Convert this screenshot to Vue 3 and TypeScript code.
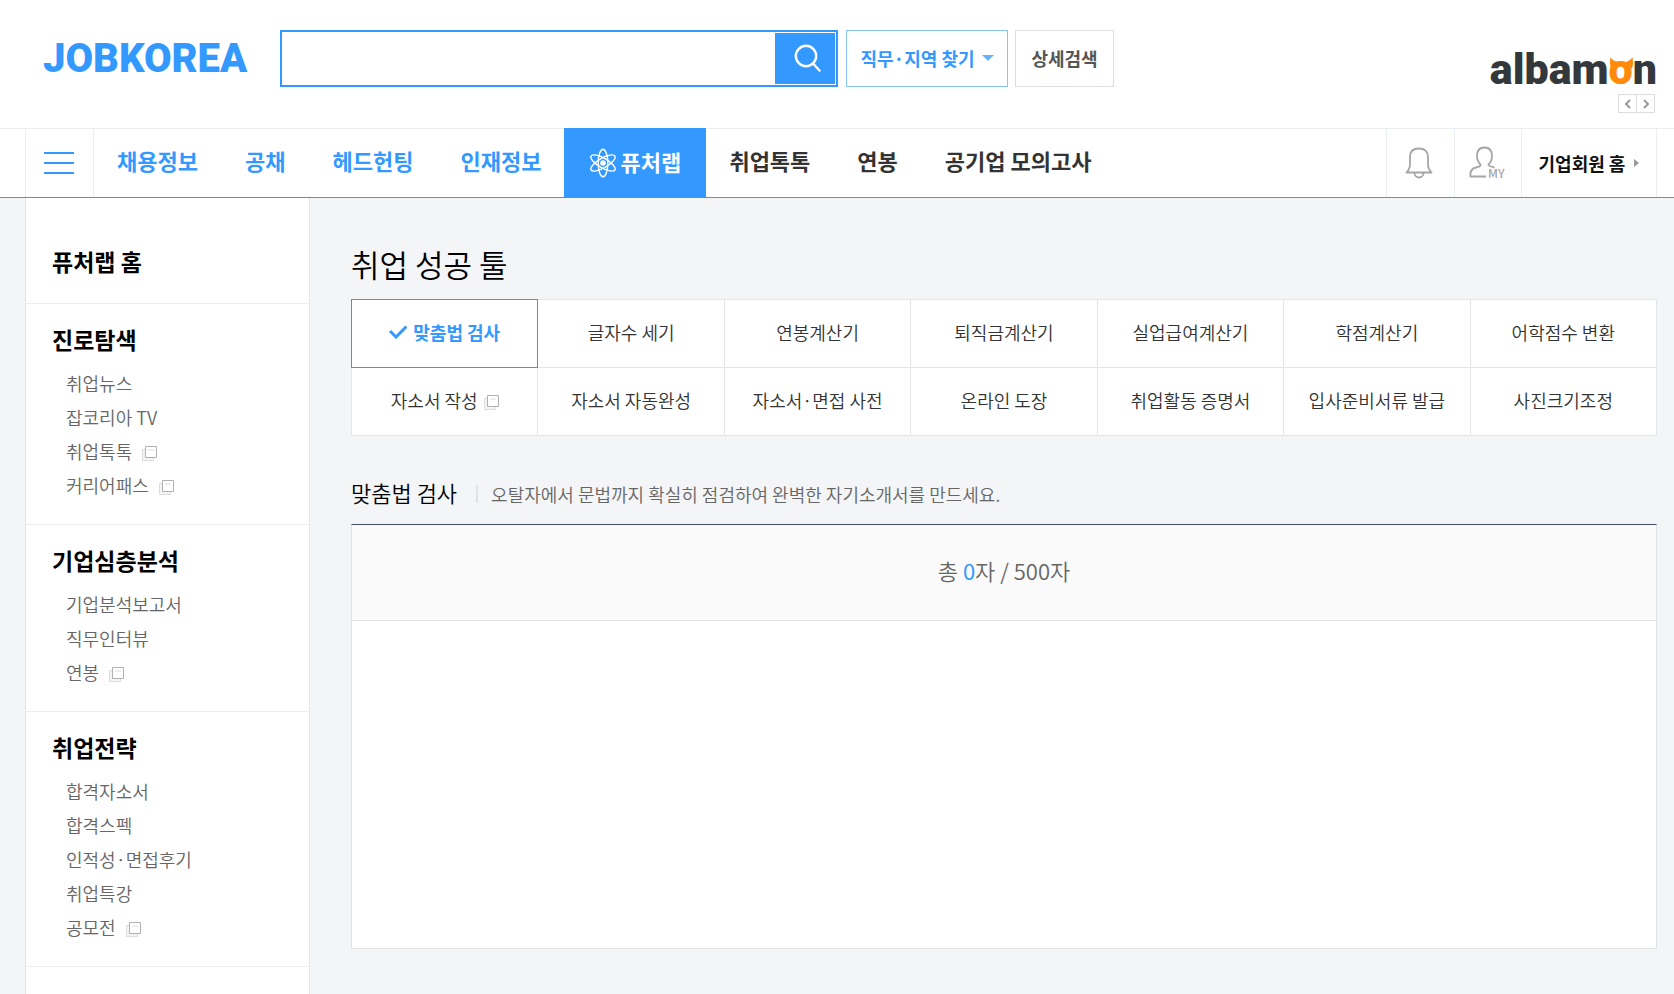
<script setup lang="ts">
import { ref, computed } from 'vue'

interface LinkItem { label: string; popup?: boolean }
interface Section { title: string; items: LinkItem[] }

const keyword = ref('')
const draft = ref('')
const limit = 500
const count = computed(() => draft.value.length)

const primaryNav = ['채용정보', '공채', '헤드헌팅', '인재정보']
const secondaryNav = ['취업톡톡', '연봉', '공기업 모의고사']

const sections: Section[] = [
  { title: '진로탐색', items: [{ label: '취업뉴스' }, { label: '잡코리아 TV' }, { label: '취업톡톡', popup: true }, { label: '커리어패스', popup: true }] },
  { title: '기업심층분석', items: [{ label: '기업분석보고서' }, { label: '직무인터뷰' }, { label: '연봉', popup: true }] },
  { title: '취업전략', items: [{ label: '합격자소서' }, { label: '합격스펙' }, { label: '인적성·면접후기' }, { label: '취업특강' }, { label: '공모전', popup: true }] },
]

const tools: LinkItem[] = [
  { label: '맞춤법 검사' }, { label: '글자수 세기' }, { label: '연봉계산기' }, { label: '퇴직금계산기' },
  { label: '실업급여계산기' }, { label: '학점계산기' }, { label: '어학점수 변환' },
  { label: '자소서 작성', popup: true }, { label: '자소서 자동완성' }, { label: '자소서·면접 사전' }, { label: '온라인 도장' },
  { label: '취업활동 증명서' }, { label: '입사준비서류 발급' }, { label: '사진크기조정' },
]
const activeTool = '맞춤법 검사'
</script>

<template>
  <div class="page">
    <header class="top">
      <a href="#" class="logo">JOBKOREA</a>
      <form class="search" @submit.prevent>
        <input v-model="keyword" type="text" aria-label="검색어" />
        <button type="submit" aria-label="검색">
          <svg width="28" height="30" viewBox="0 0 28 30" fill="none" stroke="#fff" stroke-width="2.4" stroke-linecap="round">
            <circle cx="13" cy="12" r="10.2" /><path d="M20.500 20l6 6.500" />
          </svg>
        </button>
      </form>
      <button type="button" class="box find">직무·지역 찾기
        <svg width="12" height="6" viewBox="0 0 12 6"><path d="M0 0h12L6 6z" fill="#66b2ff" /></svg>
      </button>
      <button type="button" class="box detail">상세검색</button>
      <div class="partner">
        <a href="#" class="albamon">albam<span class="mon">o<svg class="horns" width="26" height="12" viewBox="0 0 26 12"><path d="M1.500 0Q3 3 9 5.500L2 12Q0 6 1.500 0zM23.500 0Q22 3 16 5.500L23 12Q25 6 23.500 0z" fill="#ff8a0a" /></svg></span>n</a>
        <div class="pager">
          <button type="button" aria-label="이전"><svg width="8" height="10" viewBox="0 0 8 10"><path d="M6 1L2 5l4 4" /></svg></button>
          <button type="button" aria-label="다음"><svg width="8" height="10" viewBox="0 0 8 10"><path d="M2 1l4 4-4 4" /></svg></button>
        </div>
      </div>
    </header>

    <nav class="gnb">
      <button type="button" class="menu" aria-label="전체메뉴">
        <svg width="30" height="22" viewBox="0 0 30 22" stroke="#39f" stroke-width="2"><path d="M0 1h30M0 11h30M0 21h30" /></svg>
      </button>
      <div class="links primary"><a v-for="n in primaryNav" :key="n" href="#">{{ n }}</a></div>
      <a href="#" class="lab">
        <svg width="26" height="30" viewBox="0 0 26 30" fill="none" stroke="#fff" stroke-width="1.400">
          <ellipse cx="13" cy="15" rx="4.800" ry="13.800" />
          <ellipse cx="13" cy="15" rx="4.800" ry="13.800" transform="rotate(60 13 15)" />
          <ellipse cx="13" cy="15" rx="4.800" ry="13.800" transform="rotate(-60 13 15)" />
          <circle cx="13" cy="15" r="2.800" fill="#fff" stroke="none" />
        </svg>
        <span>퓨처랩</span>
      </a>
      <div class="links secondary"><a v-for="n in secondaryNav" :key="n" href="#">{{ n }}</a></div>
      <div class="member">
        <button type="button" class="bell" aria-label="알림">
          <svg width="28" height="32" viewBox="0 0 28 32" fill="none" stroke="#a6a6a6" stroke-width="1.800" stroke-linejoin="round">
            <path d="M1.500 25.500Q5 22 5 17V10Q5 1.500 14 1.500T23 10v7q0 5 3.500 8.500z" /><path d="M9.500 26a4.500 4.500 0 0 0 9 0" />
          </svg>
        </button>
        <button type="button" class="my" aria-label="마이페이지">
          <svg width="42" height="36" viewBox="0 0 42 36" fill="none" stroke="#a6a6a6" stroke-width="1.800">
            <path d="M17 31.500H1.500Q0.500 24 7 22.500Q12 21.500 11.500 19.500Q8 16 8 11Q8 2.500 15.500 2.500T23 11Q23 16 19.500 19.500Q19 21 25.500 22.500" />
            <text x="19" y="33" font-size="12" font-weight="500" fill="#a6a6a6" stroke="none">MY</text>
          </svg>
        </button>
        <a href="#" class="company">기업회원 홈
          <svg width="5" height="8" viewBox="0 0 5 8"><path d="M0 0l5 4-5 4z" fill="#999" /></svg>
        </a>
      </div>
    </nav>

    <div class="body">
      <aside class="side">
        <h2 class="home"><a href="#">퓨처랩 홈</a></h2>
        <section v-for="s in sections" :key="s.title">
          <h2>{{ s.title }}</h2>
          <ul>
            <li v-for="i in s.items" :key="i.label">
              <a href="#">{{ i.label }}<svg v-if="i.popup" class="pop" width="15" height="15" viewBox="0 0 15 15" fill="#f4f4f4" stroke="#ddd"><path d="M.5 3.500h11v11H.5z" /><path d="M3.500 .5h11v11h-11z" fill="#fff" stroke="#b0b0b0" /><path d="M6 4h6" /></svg></a>
            </li>
          </ul>
        </section>
      </aside>

      <main>
        <h1>취업 성공 툴</h1>
        <div class="tools">
          <a v-for="t in tools" :key="t.label" href="#" :class="{ on: t.label === activeTool }">
            <svg v-if="t.label === activeTool" class="check" width="18" height="14" viewBox="0 0 18 14"><path d="M1 6l6 6L17.500 1.500" fill="none" stroke="#39f" stroke-width="3" /></svg>{{ t.label }}<svg v-if="t.popup" class="pop" width="15" height="15" viewBox="0 0 15 15" fill="#f4f4f4" stroke="#ddd"><path d="M.5 3.500h11v11H.5z" /><path d="M3.500 .5h11v11h-11z" fill="#fff" stroke="#b0b0b0" /><path d="M6 4h6" /></svg>
          </a>
        </div>
        <div class="heading">
          <h2><label for="draft">맞춤법 검사</label></h2>
          <p>오탈자에서 문법까지 확실히 점검하여 완벽한 자기소개서를 만드세요.</p>
        </div>
        <div class="panel">
          <p class="count">총 <b>{{ count }}</b>자 / {{ limit }}자</p>
          <textarea id="draft" v-model="draft" :maxlength="limit"></textarea>
        </div>
      </main>
    </div>
  </div>
</template>

<style>
body { margin: 0; background: #f4f5f7; }
</style>

<style scoped>
* { box-sizing: border-box; }
.page { display: flex; flex-direction: column; min-height: 100vh; font-family: "Noto Sans CJK KR", sans-serif; color: #333; }
a { color: inherit; text-decoration: none; }
button { font: inherit; color: inherit; padding: 0; margin: 0; border: 0; background: none; cursor: pointer; }
h1, h2, p, ul { margin: 0; padding: 0; list-style: none; }
svg { flex: none; }

.top { display: flex; align-items: flex-start; height: 128px; padding: 30px 17px 0 43px; background: #fff; }
.logo { width: 237px; font: 900 40px/58px Roboto, sans-serif; color: #39f; }
.search { display: flex; width: 558px; height: 57px; padding: 1px; border: 2px solid #39f; }
.search input { flex: 1; min-width: 0; border: 0; outline: 0; padding: 0 14px; font: inherit; font-size: 18px; }
.search button { display: flex; align-items: center; justify-content: center; width: 60px; padding-left: 4px; background: #39f; }
.box { display: flex; align-items: center; justify-content: center; height: 57px; padding-bottom: 2px; font-size: 18px; font-weight: 700; }
.find { gap: 7px; width: 162px; margin-left: 8px; border: 1px solid #85c2ff; color: #39f; }
.detail { width: 99px; margin-left: 7px; border: 1px solid #ddd; color: #555; }
.partner { display: flex; flex-direction: column; align-items: flex-end; margin-left: auto; padding-top: 14px; }
.albamon { font: 900 43px/50px Roboto, sans-serif; color: #33383d; }
.mon { position: relative; color: #ff8a0a; }
.horns { position: absolute; left: 0; top: 13px; }
.pager { display: flex; width: 37px; height: 19px; margin-right: 2px; border: 1px solid #ddd; }
.pager button { display: flex; flex: 1; align-items: center; justify-content: center; }
.pager button + button { border-left: 1px solid #ddd; }
.pager path { fill: none; stroke: #999; stroke-width: 2; }

.gnb { display: flex; height: 70px; padding: 0 17px 0 25px; background: #fff; border-top: 1px solid #eaedf2; border-bottom: 1px solid #39f; font-size: 22px; font-weight: 700; }
.menu { display: flex; align-items: center; justify-content: center; width: 69px; padding-right: 2px; border: 1px solid #eaedf2; border-width: 0 1px; }
.links { display: flex; align-items: center; gap: 47px; line-height: 32px; padding: 0 23px 6px; white-space: nowrap; }
.primary { color: #39f; }
.lab { display: flex; align-items: center; justify-content: center; gap: 5px; width: 142px; margin-top: -1px; background: #39f; color: #fff; }
.lab span { padding-bottom: 4px; }
.member { display: flex; margin-left: auto; }
.member > * { display: flex; align-items: center; justify-content: center; border-left: 1px solid #eaedf2; }
.bell { width: 68px; padding-right: 4px; }
.my { width: 67px; padding-left: 4px; }
.company { width: 136px; gap: 9px; border-right: 1px solid #eaedf2; font-size: 18px; color: #111; }

.body { display: flex; flex: 1; padding: 0 17px 0 25px; background: #f4f5f7; }
.side { width: 285px; flex: none; background: #fff; border: 1px solid #e3e5e8; border-width: 0 1px; }
.side h2 { padding-left: 26px; font-size: 23px; font-weight: 700; line-height: 34px; color: #000; }
.side .home { padding-top: 46px; padding-bottom: 25px; }
.side section { padding: 18px 0 22px; border-top: 1px solid #eee; }
.side section:last-child { border-bottom: 1px solid #eee; }
.side ul { padding: 10px 0 0 40px; }
.side li { font-size: 18px; font-weight: 350; line-height: 34px; color: #666; }
.pop { margin-left: 10px; vertical-align: -2px; }

main { flex: 1; min-width: 0; margin-left: 41px; padding-top: 43px; }
h1 { font-size: 31px; font-weight: 350; line-height: 46px; color: #000; padding-bottom: 12px; }
.tools { display: grid; grid-template-columns: repeat(7, 1fr); gap: 1px; padding: 1px; background: #e3e5e8; }
.tools a { display: flex; align-items: center; justify-content: center; height: 67px; padding-bottom: 4px; background: #fff; font-size: 18px; font-weight: 350; white-space: nowrap; }
.tools a.on { position: relative; box-shadow: 0 0 0 1px #39f; color: #39f; font-weight: 700; }
.check { margin-right: 6px; }
.tools .pop { margin-left: 6px; margin-top: 6px; }
.heading { display: flex; align-items: center; padding: 40px 0 16px; }
.heading h2 { font-size: 22px; font-weight: 350; line-height: 32px; color: #000; }
.heading p { margin-top: 4px; margin-left: 19px; padding-left: 13px; border-left: 2px solid #e0e2e5; font-size: 18px; font-weight: 350; line-height: 18px; color: #666; }
.panel { border: 1px solid #e0e2e5; border-top: 1px solid #444f6c; background: #fff; }
.count { height: 96px; background: #fafafa; border-bottom: 1px solid #e0e2e5; text-align: center; font-size: 22px; font-weight: 350; line-height: 90px; color: #666; }
.count b { font-weight: 400; color: #39f; }
textarea { display: block; width: 100%; height: 327px; border: 0; outline: 0; resize: none; padding: 20px; font: inherit; font-size: 18px; background: #fff; }
</style>
